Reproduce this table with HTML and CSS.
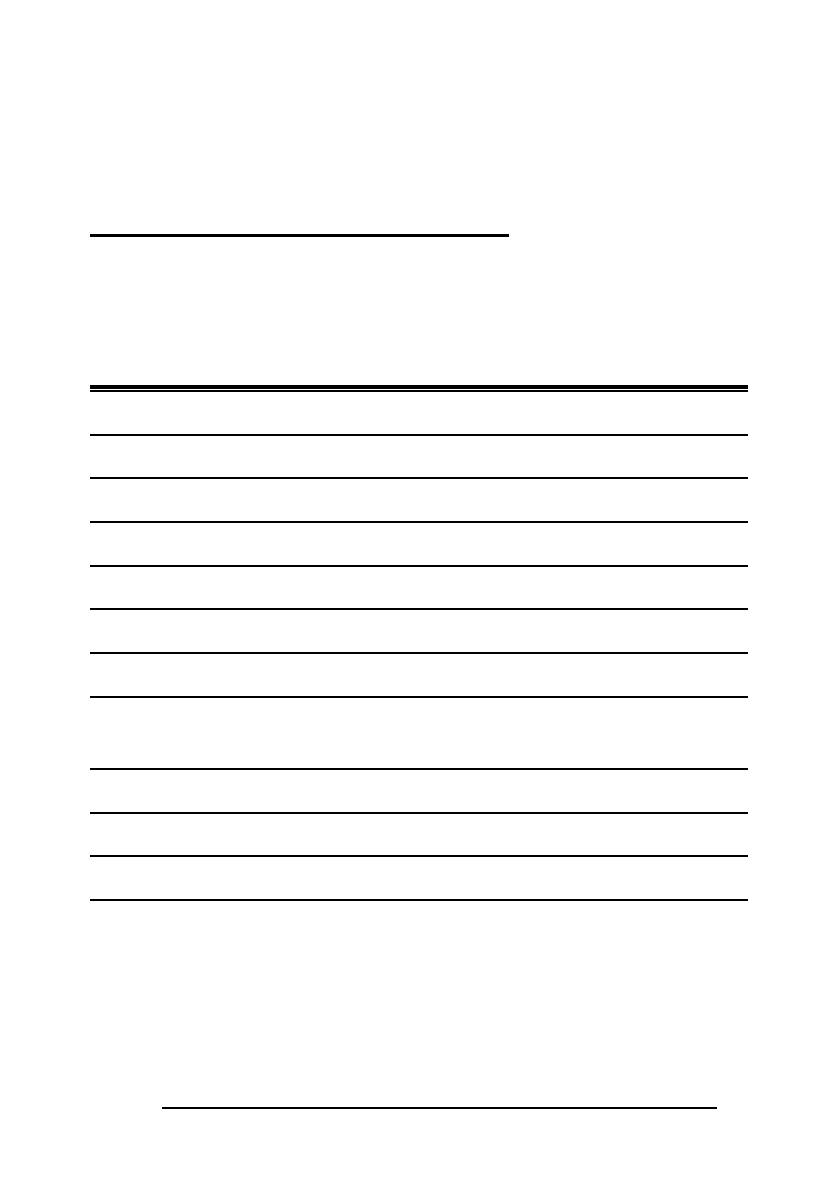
FILE: index.html
```html
<!DOCTYPE html>
<html>
<head>
<meta charset="utf-8">
<link rel="stylesheet" href="styles.css">
</head>
<body>
<div class="page">
  <div class="title-rule"></div>
  <div class="table">
    <div class="table-head"></div>
    <div class="row"></div>
    <div class="row"></div>
    <div class="row"></div>
    <div class="row"></div>
    <div class="row"></div>
    <div class="row"></div>
    <div class="row"></div>
    <div class="row tall"></div>
    <div class="row"></div>
    <div class="row"></div>
    <div class="row"></div>
  </div>
  <div class="footer-rule"></div>
</div>
</body>
</html>
```
FILE: styles.css
```css
html, body {
  margin: 0;
  padding: 0;
  background: #ffffff;
  font-family: "Liberation Serif", serif;
}
.page {
  width: 840px;
  height: 1190px;
  padding: 234px 0 0 90px;
  box-sizing: border-box;
}
.title-rule {
  width: 419px;
  height: 0;
  border-top: 3px solid #000;
}
.table {
  width: 658px;
  margin-top: 148px;
}
.table-head {
  height: 1px;
  border-top: 4px solid #000;
  border-bottom: 2px solid #000;
}
.row {
  height: 41.7px;
  border-bottom: 2px solid #000;
}
.row.tall {
  height: 70px;
}
.footer-rule {
  width: 555px;
  margin: 206px 0 0 72px;
  border-top: 2px solid #000;
}
```
